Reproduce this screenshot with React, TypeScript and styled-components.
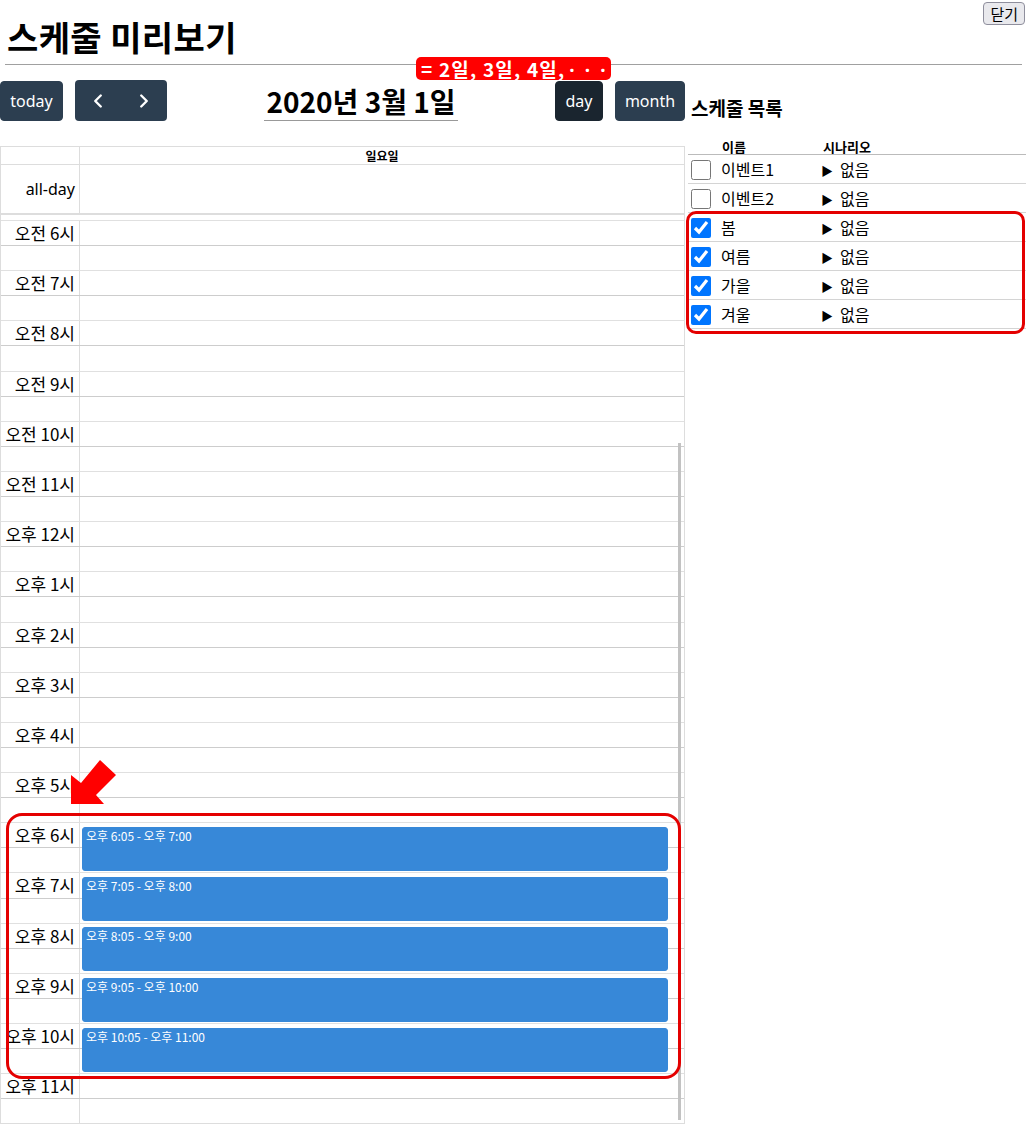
import React from "react";
import styled, { createGlobalStyle } from "styled-components";
import { ChevronLeft, ChevronRight } from "lucide-react";

const GlobalStyle = createGlobalStyle`
  html, body { margin: 0; padding: 0; background: #fff; }
  body { font-family: "Noto Sans", "Noto Sans CJK KR", sans-serif; color: #000; }
`;

const KR = `"Noto Sans CJK KR", "Noto Sans", sans-serif`;

const Page = styled.div`
  width: 1028px;
  height: 1125px;
  overflow: hidden;
`;

const Header = styled.header`
  display: flex;
  justify-content: space-between;
  align-items: flex-start;
  margin: 0 6px 0 5px;
  height: 65px;
  box-sizing: border-box;
  border-bottom: 1px solid #a0a0a0;
`;

const Title = styled.h1`
  margin: 17px 0 0 2px;
  font-family: ${KR};
  font-size: 34px;
  font-weight: 700;
  line-height: 40px;
  letter-spacing: 0.4px;
`;

const CloseButton = styled.button`
  margin: 2px -3px 0 0;
  height: 23px;
  padding: 0 6px;
  font-family: ${KR};
  font-size: 15px;
  line-height: 20px;
  background: #e9e9ed;
  border: 1px solid #8f8f9d;
  border-radius: 4px;
  color: #000;
`;

const Main = styled.div`
  display: flex;
  margin-top: 15px;
`;

const CalendarCol = styled.section`
  position: relative;
  width: 685px;
  flex: none;
`;

const Badge = styled.div`
  position: absolute;
  left: 416px;
  top: -23px;
  height: 23px;
  width: 195px;
  box-sizing: border-box;
  background: #f00;
  color: #fff;
  border-radius: 5px;
  font-family: ${KR};
  font-weight: 700;
  font-size: 19px;
  line-height: 23px;
  padding-left: 5px;
  white-space: nowrap;
  letter-spacing: 1.2px;
`;

const Dots = styled.span`
  font-family: "Noto Sans", sans-serif;
  letter-spacing: 2.6px;
  margin-left: 4px;
`;

const Toolbar = styled.div`
  display: flex;
  justify-content: space-between;
  align-items: center;
  height: 41px;
  margin-bottom: 25px;
`;

const ButtonGroup = styled.div`
  display: flex;
  align-items: center;
  gap: 12px;
`;

const ToolButton = styled.button<{ $w: number; $active?: boolean }>`
  width: ${(p) => p.$w}px;
  height: 40px;
  border: 1px solid ${(p) => (p.$active ? "#1a252f" : "#2c3e50")};
  background: ${(p) => (p.$active ? "#1a252f" : "#2c3e50")};
  color: #fff;
  border-radius: 4px;
  font-family: "Noto Sans", sans-serif;
  font-size: 16px;
  padding: 0;
  display: flex;
  align-items: center;
  justify-content: center;
`;

const NavGroup = styled.div`
  display: flex;
  height: 41px;
  border-radius: 4px;
  overflow: hidden;
`;

const NavButton = styled.button`
  width: 46px;
  height: 41px;
  border: none;
  background: #2c3e50;
  color: #fff;
  padding: 0;
  display: flex;
  align-items: center;
  justify-content: center;
`;

const DateTitle = styled.h2`
  margin: 1px 0 0;
  font-family: ${KR};
  font-size: 28px;
  font-weight: 700;
  line-height: 38px;
  border-bottom: 1px solid #999;
  padding: 0 2px;
`;

const Grid = styled.div`
  position: relative;
  border: 1px solid #ddd;
  border-bottom: none;
`;

const Row = styled.div<{ $h: number; $noLine?: boolean }>`
  display: grid;
  grid-template-columns: 79px 1fr;
  height: ${(p) => p.$h}px;
  box-sizing: border-box;
  border-bottom: ${(p) => (p.$noLine ? "none" : "1px solid #ddd")};
`;

const AxisCell = styled.div`
  border-right: 1px solid #ddd;
  text-align: right;
  padding-right: 4px;
  font-size: 16px;
  font-family: "Noto Sans", "Noto Sans CJK KR", sans-serif;
`;

const DayHead = styled.div`
  text-align: center;
  font-family: ${KR};
  font-weight: 700;
  font-size: 12px;
  line-height: 17px;
`;

const AllDayLabel = styled(AxisCell)`
  line-height: 48px;
`;

const Divider = styled.div`
  height: 7px;
  box-sizing: border-box;
  border-top: 2px solid #ddd;
`;

const Body = styled.div`
  position: relative;
  border-bottom: 1px solid #ddd;
`;

const Slot = styled.div<{ $minor?: boolean }>`
  display: grid;
  grid-template-columns: 79px 1fr;
  height: 25.1px;
  box-sizing: border-box;
  border-top: 1px solid ${(p) => (p.$minor ? "#cdcdcd" : "#e0e0e0")};
`;

const TimeLabel = styled(AxisCell)`
  font-family: ${KR};
  font-size: 17px;
  line-height: 24px;
  white-space: nowrap;
  padding-right: 4px;
`;

const Event = styled.div`
  position: absolute;
  left: 81px;
  width: 586px;
  box-sizing: border-box;
  background: #3788d8;
  border: 1px solid #3788d8;
  border-radius: 3px;
  color: #fff;
  font-family: ${KR};
  font-size: 12px;
  line-height: 15px;
  padding: 0 3px;
`;

const ScrollThumb = styled.div`
  position: absolute;
  right: 3px;
  top: 223px;
  width: 3px;
  height: 677px;
  background: #c2c2c2;
`;

const Highlight = styled.div<{ $l: number; $t: number; $w: number; $h: number; $r: number }>`
  position: absolute;
  left: ${(p) => p.$l}px;
  top: ${(p) => p.$t}px;
  width: ${(p) => p.$w}px;
  height: ${(p) => p.$h}px;
  box-sizing: border-box;
  border: 3px solid #e40000;
  border-radius: ${(p) => p.$r}px;
  pointer-events: none;
`;

const Arrow = styled.svg`
  position: absolute;
  left: 67px;
  top: 609px;
`;

const Sidebar = styled.aside`
  flex: 1;
  padding: 0 2px 0 3px;
`;

const SideTitle = styled.h3`
  margin: 14px 0 0 3px;
  font-family: ${KR};
  font-size: 19px;
  font-weight: 700;
  line-height: 28px;
`;

const TableWrap = styled.div`
  position: relative;
  margin-top: 15px;
`;

const Table = styled.table`
  width: 100%;
  border-collapse: collapse;
  table-layout: fixed;
  font-family: ${KR};
`;

const Th = styled.th<{ $w?: number; $pl: number }>`
  width: ${(p) => (p.$w ? `${p.$w}px` : "auto")};
  text-align: left;
  font-size: 13px;
  font-weight: 700;
  height: 17px;
  line-height: 15px;
  padding: 0 0 0 ${(p) => p.$pl}px;
  border-bottom: 1px solid #bbb;
  vertical-align: bottom;
`;

const Tr = styled.tr`
  height: 29px;
  border-bottom: 1px solid #d4d4d4;
`;

const Td = styled.td<{ $pl: number }>`
  height: 28px;
  padding: 0 0 0 ${(p) => p.$pl}px;
  font-size: 16px;
  line-height: 20px;
  vertical-align: middle;
  white-space: nowrap;
`;

const Triangle = styled.span`
  display: inline-block;
  font-size: 12px;
  line-height: 12px;
  width: 19px;
`;

const Check = styled.input`
  width: 20px;
  height: 20px;
  margin: 1px 0 0 3px;
  accent-color: #0075ff;
  display: block;
`;

const hours = [
  "오전 6시", "오전 7시", "오전 8시", "오전 9시", "오전 10시", "오전 11시",
  "오후 12시", "오후 1시", "오후 2시", "오후 3시", "오후 4시", "오후 5시",
  "오후 6시", "오후 7시", "오후 8시", "오후 9시", "오후 10시", "오후 11시",
];

const events = [
  { h: 12, label: "오후 6:05 - 오후 7:00" },
  { h: 13, label: "오후 7:05 - 오후 8:00" },
  { h: 14, label: "오후 8:05 - 오후 9:00" },
  { h: 15, label: "오후 9:05 - 오후 10:00" },
  { h: 16, label: "오후 10:05 - 오후 11:00" },
];

const schedules = [
  { name: "이벤트1", checked: false },
  { name: "이벤트2", checked: false },
  { name: "봄", checked: true },
  { name: "여름", checked: true },
  { name: "가을", checked: true },
  { name: "겨울", checked: true },
];

const HOUR = 50.2;

export default function App() {
  return (
    <Page>
      <GlobalStyle />
      <Header>
        <Title>스케줄 미리보기</Title>
        <CloseButton>닫기</CloseButton>
      </Header>
      <Main>
        <CalendarCol>
          <Badge>
            = 2일, 3일, 4일,<Dots>· · ·</Dots>
          </Badge>
          <Toolbar>
            <ButtonGroup>
              <ToolButton $w={63}>today</ToolButton>
              <NavGroup>
                <NavButton aria-label="prev">
                  <ChevronLeft size={22} strokeWidth={2.6} />
                </NavButton>
                <NavButton aria-label="next">
                  <ChevronRight size={22} strokeWidth={2.6} />
                </NavButton>
              </NavGroup>
            </ButtonGroup>
            <DateTitle>2020년 3월 1일</DateTitle>
            <ButtonGroup>
              <ToolButton $w={48} $active>day</ToolButton>
              <ToolButton $w={70}>month</ToolButton>
            </ButtonGroup>
          </Toolbar>
          <Grid>
            <Row $h={18}>
              <AxisCell />
              <DayHead>일요일</DayHead>
            </Row>
            <Row $h={48} $noLine>
              <AllDayLabel>all-day</AllDayLabel>
              <div />
            </Row>
            <Divider />
            <Body>
              {hours.map((h) => (
                <React.Fragment key={h}>
                  <Slot>
                    <TimeLabel>{h}</TimeLabel>
                    <div />
                  </Slot>
                  <Slot $minor>
                    <AxisCell />
                    <div />
                  </Slot>
                </React.Fragment>
              ))}
              {events.map((e) => (
                <Event
                  key={e.label}
                  style={{ top: (e.h + 5 / 60) * HOUR + 0.5, height: (55 / 60) * HOUR - 2 }}
                >
                  {e.label}
                </Event>
              ))}
              <ScrollThumb />
            </Body>
            <Highlight $l={5} $t={666} $w={675} $h={266} $r={16} />
            <Arrow width="50" height="52" viewBox="0 0 50 52">
              <polygon
                points="3,48 3,19 13,27 32,4 48,19 28,39 36,48"
                fill="#f00"
              />
            </Arrow>
          </Grid>
        </CalendarCol>
        <Sidebar>
          <SideTitle>스케줄 목록</SideTitle>
          <TableWrap>
            <Table>
              <thead>
                <tr>
                  <Th $w={28} $pl={0} />
                  <Th $w={95} $pl={6}>이름</Th>
                  <Th $pl={6}>시나리오</Th>
                </tr>
              </thead>
              <tbody>
                {schedules.map((s) => (
                  <Tr key={s.name}>
                    <Td $pl={0}>
                      <Check type="checkbox" defaultChecked={s.checked} />
                    </Td>
                    <Td $pl={5}>{s.name}</Td>
                    <Td $pl={4}>
                      <Triangle>▶</Triangle>없음
                    </Td>
                  </Tr>
                ))}
              </tbody>
            </Table>
            <Highlight $l={-2} $t={74} $w={339} $h={123} $r={10} />
          </TableWrap>
        </Sidebar>
      </Main>
    </Page>
  );
}
